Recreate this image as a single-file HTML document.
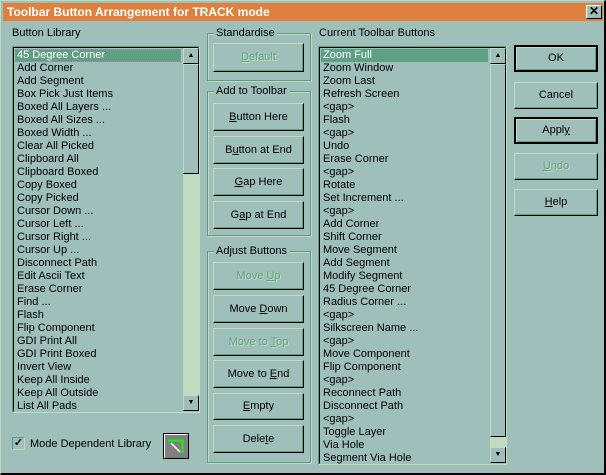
<!DOCTYPE html>
<html><head><meta charset="utf-8"><style>
*{margin:0;padding:0;box-sizing:border-box}
body{width:606px;height:475px;overflow:hidden;background:#000;font-family:"Liberation Sans",Arial,sans-serif;font-size:11px;color:#000;position:relative}
.win{position:absolute;left:0;top:0;width:606px;height:475px;background:#9fbfba;border-top:1px solid #c0dcc0;border-left:1px solid #c0dcc0;border-right:2px solid #000;border-bottom:2px solid #000}
.title{position:absolute;left:2px;top:2px;width:600px;height:18px;background:#e0803f;color:#fff;font-weight:bold;font-size:12px;line-height:18px;padding-left:4px}
.close{position:absolute;left:585px;top:4px;width:16px;height:14px;background:#9fbfba;border:1px solid;border-color:#fff #000 #000 #fff;font-size:12px;font-weight:bold;line-height:11px;text-align:center}
.a{position:absolute}
.lbl{position:absolute;line-height:13px;white-space:nowrap}
.list{position:absolute;background:#9fbfba;border:1px solid;border-color:#5f9f7f #c0dcc0 #c0dcc0 #5f9f7f}
.list .in{position:absolute;left:0;top:0;right:0;bottom:0;border:1px solid;border-color:#000 #9fbfba #9fbfba #000}
.it{height:13px;line-height:13px;padding-left:2px;white-space:nowrap}
.sel{background:#5f9f84;color:#fff}
.sb{position:absolute;top:0;width:16px;bottom:0;background:#c0dcc0}
.sbb{position:absolute;left:0;width:16px;background:#9fbfba;border:1px solid;border-color:#c0dcc0 #000 #000 #c0dcc0;font-size:7px;text-align:center;line-height:13px}
.grp{position:absolute;border:1px solid #5f9f7f;box-shadow:inset 1px 1px 0 #c0dcc0,1px 1px 0 #c0dcc0}
.grp span{position:absolute;top:-7px;left:6px;background:#9fbfba;padding:0 2px;line-height:13px;white-space:nowrap}
.btn{position:absolute;background:#9fbfba;border:1px solid;border-color:#c0dcc0 #000 #000 #c0dcc0;box-shadow:inset -1px -1px 0 #5f9f7f;text-align:center;white-space:nowrap}
.dis{color:#5fa583;text-shadow:1px 1px 0 #c0dcc0}
.bold{border:2px solid #000;box-shadow:inset 1px 1px 0 #c0dcc0,inset -1px -1px 0 #5f9f7f}
u{text-decoration:underline}
</style></head><body><div class="win">
<div class="title">Toolbar Button Arrangement for TRACK mode</div>
<div class="close">✕</div>

<div class="lbl" style="left:11px;top:26px">Button Library</div>
<div class="list" style="left:11px;top:45px;width:188px;height:367px"><div class="in">
<div style="position:absolute;left:1px;top:1px;right:17px">
<div class="it sel" style="outline:1px dotted #c080c0;outline-offset:-1px">45 Degree Corner</div>
<div class="it">Add Corner</div><div class="it">Add Segment</div><div class="it">Box Pick Just Items</div><div class="it">Boxed All Layers ...</div><div class="it">Boxed All Sizes ...</div><div class="it">Boxed Width ...</div><div class="it">Clear All Picked</div><div class="it">Clipboard All</div><div class="it">Clipboard Boxed</div><div class="it">Copy Boxed</div><div class="it">Copy Picked</div><div class="it">Cursor Down ...</div><div class="it">Cursor Left ...</div><div class="it">Cursor Right ...</div><div class="it">Cursor Up ...</div><div class="it">Disconnect Path</div><div class="it">Edit Ascii Text</div><div class="it">Erase Corner</div><div class="it">Find ...</div><div class="it">Flash</div><div class="it">Flip Component</div><div class="it">GDI Print All</div><div class="it">GDI Print Boxed</div><div class="it">Invert View</div><div class="it">Keep All Inside</div><div class="it">Keep All Outside</div><div class="it">List All Pads</div>
</div>
<div class="sb" style="left:169px;top:0">
<div class="sbb" style="top:0;height:16px">▲</div>
<div class="sbb" style="top:16px;height:110px"></div>
<div class="sbb" style="bottom:0;height:16px">▼</div>
</div></div></div>

<div class="a" style="left:11px;top:436px;width:13px;height:13px;border:1px solid;border-color:#5f9f7f #c0dcc0 #c0dcc0 #5f9f7f;background:#9fbfba;font-size:11px;line-height:11px;text-align:center;font-weight:bold">✓</div>
<div class="lbl" style="left:29px;top:437px">Mode Dependent Library</div>
<div class="a" style="left:162px;top:432px;width:26px;height:26px;border:1px solid #000;background:#808080;box-shadow:inset 1px 1px 0 #fff">
<svg width="24" height="24" style="position:absolute;left:0;top:0"><path d="M4 6.5H18.5V19" stroke="#00ff00" stroke-width="2" fill="none"/><path d="M7 9L16 18" stroke="#fff" stroke-width="1.5"/></svg></div>

<div class="grp" style="left:206px;top:32px;width:104px;height:48px"><span>Standardise</span></div>
<div class="btn dis" style="left:212px;top:42px;width:91px;height:29px;line-height:27px"><u>D</u>efault</div>

<div class="grp" style="left:206px;top:90px;width:104px;height:145px"><span>Add to Toolbar</span></div>
<div class="btn" style="left:212px;top:102px;width:91px;height:28px;line-height:26px"><u>B</u>utton Here</div>
<div class="btn" style="left:212px;top:135px;width:91px;height:28px;line-height:26px">B<u>u</u>tton at End</div>
<div class="btn" style="left:212px;top:167px;width:91px;height:28px;line-height:26px"><u>G</u>ap Here</div>
<div class="btn" style="left:212px;top:200px;width:91px;height:28px;line-height:26px">G<u>a</u>p at End</div>

<div class="grp" style="left:206px;top:250px;width:104px;height:212px"><span>Adjust Buttons</span></div>
<div class="btn dis" style="left:212px;top:261px;width:91px;height:28px;line-height:26px">Move <u>U</u>p</div>
<div class="btn" style="left:212px;top:294px;width:91px;height:28px;line-height:26px">Move <u>D</u>own</div>
<div class="btn dis" style="left:212px;top:327px;width:91px;height:28px;line-height:26px">Move to <u>T</u>op</div>
<div class="btn" style="left:212px;top:359px;width:91px;height:28px;line-height:26px">Move to <u>E</u>nd</div>
<div class="btn" style="left:212px;top:392px;width:91px;height:27px;line-height:25px"><u>E</u>mpty</div>
<div class="btn" style="left:212px;top:424px;width:91px;height:28px;line-height:26px">Dele<u>t</u>e</div>

<div class="lbl" style="left:318px;top:26px">Current Toolbar Buttons</div>
<div class="list" style="left:317px;top:45px;width:189px;height:419px"><div class="in">
<div style="position:absolute;left:1px;top:1px;right:17px">
<div class="it sel">Zoom Full</div><div class="it">Zoom Window</div><div class="it">Zoom Last</div><div class="it">Refresh Screen</div><div class="it">&lt;gap&gt;</div><div class="it">Flash</div><div class="it">&lt;gap&gt;</div><div class="it">Undo</div><div class="it">Erase Corner</div><div class="it">&lt;gap&gt;</div><div class="it">Rotate</div><div class="it">Set Increment ...</div><div class="it">&lt;gap&gt;</div><div class="it">Add Corner</div><div class="it">Shift Corner</div><div class="it">Move Segment</div><div class="it">Add Segment</div><div class="it">Modify Segment</div><div class="it">45 Degree Corner</div><div class="it">Radius Corner ...</div><div class="it">&lt;gap&gt;</div><div class="it">Silkscreen Name ...</div><div class="it">&lt;gap&gt;</div><div class="it">Move Component</div><div class="it">Flip Component</div><div class="it">&lt;gap&gt;</div><div class="it">Reconnect Path</div><div class="it">Disconnect Path</div><div class="it">&lt;gap&gt;</div><div class="it">Toggle Layer</div><div class="it">Via Hole</div><div class="it">Segment Via Hole</div>
</div>
<div class="sb" style="left:170px;top:0">
<div class="sbb" style="top:0;height:16px">▲</div>
<div class="sbb" style="top:16px;height:373px"></div>
<div class="sbb" style="bottom:0;height:16px">▼</div>
</div></div></div>

<div class="btn bold" style="left:513px;top:44px;width:84px;height:27px;line-height:23px">OK</div>
<div class="btn" style="left:513px;top:81px;width:84px;height:27px;line-height:25px">Cancel</div>
<div class="btn bold" style="left:513px;top:116px;width:84px;height:27px;line-height:23px">Appl<u>y</u></div>
<div class="btn dis" style="left:513px;top:152px;width:84px;height:27px;line-height:25px"><u>U</u>ndo</div>
<div class="btn" style="left:513px;top:188px;width:84px;height:27px;line-height:25px"><u>H</u>elp</div>
</div></body></html>
